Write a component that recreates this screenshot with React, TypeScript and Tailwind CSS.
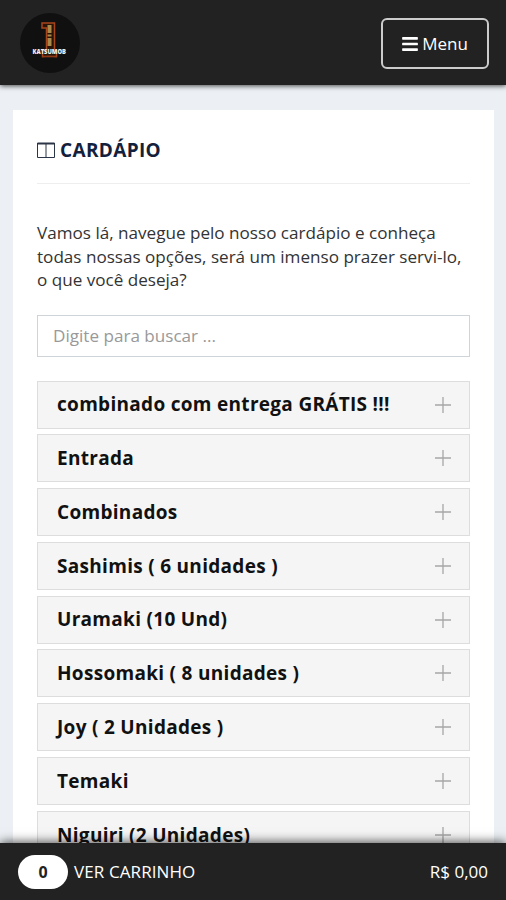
import { FaBars } from 'react-icons/fa'

const categories: string[] = [
  'combinado com entrega GRÁTIS !!!',
  'Entrada',
  'Combinados',
  'Sashimis ( 6 unidades )',
  'Uramaki (10 Und)',
  'Hossomaki ( 8 unidades )',
  'Joy ( 2 Unidades )',
  'Temaki',
  'Niguiri (2 Unidades)',
]

function Logo() {
  return (
    <svg viewBox="0 0 60 60" className="h-[60px] w-[60px]">
      <circle cx="30" cy="30" r="30" fill="#101010" />
      <path d="M22 10h12.500v27.500h2v6h-14v-6h4v-22.500h-4.500z" fill="#2a1408" stroke="#a8441a" strokeWidth="1.500" />
      <path d="M29.500 12v21" stroke="#a98a4c" strokeWidth="4" strokeDasharray="8 1.500 2 1.500" />
      <text x="12.500" y="41.300" textLength="33.500" lengthAdjust="spacingAndGlyphs" fontFamily="Open Sans, sans-serif" fontWeight="800" fontSize="7" fill="#f1f1f1">KATSUMOB</text>
      <path d="M22 44q7.500-1.500 15 0" fill="none" stroke="#8a3717" strokeWidth="1.200" />
    </svg>
  )
}

function ColumnsIcon() {
  return (
    <svg viewBox="0 0 18 16" className="-mt-0.5 h-4 w-[18px]" fill="none" stroke="#2b3547">
      <path d="M.5 1.500h17" strokeWidth="2" />
      <path d="M.5 1v14.500h17V1M9 2v13.500" strokeWidth="1" />
    </svg>
  )
}

function PlusIcon() {
  return (
    <svg viewBox="0 0 16 16" className="h-4 w-4" stroke="#a6a6a6" strokeWidth="1.300">
      <path d="M8 0v16M0 8h16" />
    </svg>
  )
}

function Header() {
  return (
    <header className="relative z-10 flex h-[85px] items-center justify-between bg-[#222] pr-[17px] pl-5 shadow-[0_1px_5px_rgba(0,0,0,0.7)]">
      <Logo />
      <button className="mt-0.5 flex h-[51px] w-[108px] items-center justify-center gap-1 rounded-md border-2 border-[#ccc] text-[17px] font-medium text-white">
        <FaBars className="h-[18px] w-4" />
        <span>Menu</span>
      </button>
    </header>
  )
}

function CategoryRow({ name }: { name: string }) {
  return (
    <li className="flex h-12 shrink-0 items-center justify-between border border-[#ddd] bg-[#f5f5f5] pr-[18px] pl-[19px]">
      <span className="text-[19px] font-bold tracking-[0.3px] text-[#111]">{name}</span>
      <PlusIcon />
    </li>
  )
}

function CartBar() {
  return (
    <footer className="relative z-10 flex h-[57px] shrink-0 items-center bg-[#222] px-[18px] text-[17px] font-medium text-white shadow-[0_-1px_10px_rgba(0,0,0,0.7)]">
      <span className="flex h-[34px] w-[50px] items-center justify-center rounded-full bg-white text-base font-bold text-[#222]">0</span>
      <span className="ml-1.5 pt-px tracking-[0.1px]">VER CARRINHO</span>
      <span className="ml-auto pt-px">R$ 0,00</span>
    </footer>
  )
}

export default function App() {
  return (
    <div className="flex h-[900px] w-[506px] flex-col overflow-hidden bg-[#ecf0f4] font-['Open_Sans',sans-serif]">
      <Header />
      <main className="mt-[25px] mr-3 ml-[13px] min-h-0 flex-1 overflow-hidden bg-white px-6">
        <h1 className="flex h-[74px] items-center gap-[5px] border-b border-[#eee] pt-2 text-[19px] font-bold tracking-[0.35px] text-[#14213d]">
          <ColumnsIcon />
          CARDÁPIO
        </h1>
        <p className="mt-[37px] text-[17.100px] leading-[23.500px] whitespace-nowrap text-[#333]">
          Vamos lá, navegue pelo nosso cardápio e conheça<br />
          todas nossas opções, será um imenso prazer servi-lo,<br />
          o que você deseja?
        </p>
        <input
          type="text"
          placeholder="Digite para buscar ..."
          className="mt-[23px] block h-[42px] w-full border border-[#cfd4d8] px-[15px] text-[17.100px] outline-none placeholder:text-[#999]"
        />
        <ul className="mt-6 flex flex-col gap-[5.800px]">
          {categories.map((name) => (
            <CategoryRow key={name} name={name} />
          ))}
        </ul>
      </main>
      <CartBar />
    </div>
  )
}
